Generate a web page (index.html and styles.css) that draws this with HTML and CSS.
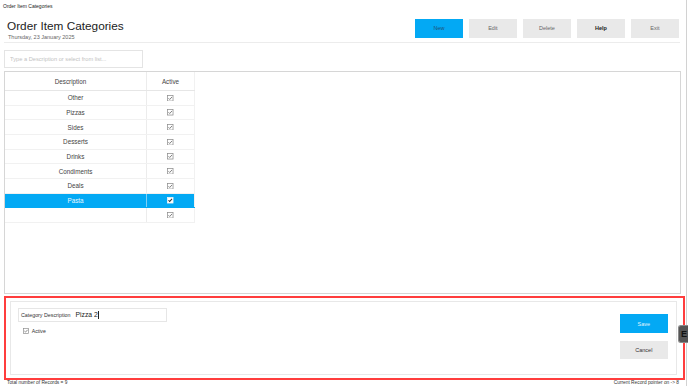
FILE: index.html
```html
<!DOCTYPE html>
<html lang="en">
<head>
<meta charset="utf-8">
<title>Order Item Categories</title>
<link rel="stylesheet" href="styles.css">
</head>
<body>
<div class="app">
  <div class="titlebar">Order Item Categories</div>
  <div class="header">
    <div class="heading">
      <h1>Order Item Categories</h1>
      <div class="date">Thursday, 23 January 2025</div>
    </div>
    <div class="actions">
      <button class="btn btn-primary">New</button>
      <button class="btn">Edit</button>
      <button class="btn">Delete</button>
      <button class="btn btn-bold">Help</button>
      <button class="btn">Exit</button>
    </div>
  </div>
  <input class="search" type="text" placeholder="Type a Description or select from list...">
  <div class="grid">
    <div class="table">
      <div class="row head"><div class="cell desc">Description</div><div class="cell act">Active</div></div>
      <div class="row"><div class="cell desc">Other</div><div class="cell act"><svg class="chk" viewBox="0 0 7 7"><rect x="0.5" y="0.5" width="6" height="6"/><path d="M1.6 3.5 L2.9 4.8 L5.4 2.1"/></svg></div></div>
      <div class="row"><div class="cell desc">Pizzas</div><div class="cell act"><svg class="chk" viewBox="0 0 7 7"><rect x="0.5" y="0.5" width="6" height="6"/><path d="M1.6 3.5 L2.9 4.8 L5.4 2.1"/></svg></div></div>
      <div class="row"><div class="cell desc">Sides</div><div class="cell act"><svg class="chk" viewBox="0 0 7 7"><rect x="0.5" y="0.5" width="6" height="6"/><path d="M1.6 3.5 L2.9 4.8 L5.4 2.1"/></svg></div></div>
      <div class="row"><div class="cell desc">Desserts</div><div class="cell act"><svg class="chk" viewBox="0 0 7 7"><rect x="0.5" y="0.5" width="6" height="6"/><path d="M1.6 3.5 L2.9 4.8 L5.4 2.1"/></svg></div></div>
      <div class="row"><div class="cell desc">Drinks</div><div class="cell act"><svg class="chk" viewBox="0 0 7 7"><rect x="0.5" y="0.5" width="6" height="6"/><path d="M1.6 3.5 L2.9 4.8 L5.4 2.1"/></svg></div></div>
      <div class="row"><div class="cell desc">Condiments</div><div class="cell act"><svg class="chk" viewBox="0 0 7 7"><rect x="0.5" y="0.5" width="6" height="6"/><path d="M1.6 3.5 L2.9 4.8 L5.4 2.1"/></svg></div></div>
      <div class="row"><div class="cell desc">Deals</div><div class="cell act"><svg class="chk" viewBox="0 0 7 7"><rect x="0.5" y="0.5" width="6" height="6"/><path d="M1.6 3.5 L2.9 4.8 L5.4 2.1"/></svg></div></div>
      <div class="row selected"><div class="cell desc">Pasta</div><div class="cell act"><svg class="chk" viewBox="0 0 7 7"><rect x="0.5" y="0.5" width="6" height="6"/><path d="M1.6 3.5 L2.9 4.8 L5.4 2.1"/></svg></div></div>
      <div class="row"><div class="cell desc"></div><div class="cell act"><svg class="chk" viewBox="0 0 7 7"><rect x="0.5" y="0.5" width="6" height="6"/><path d="M1.6 3.5 L2.9 4.8 L5.4 2.1"/></svg></div></div>
    </div>
  </div>
  <div class="editor">
    <div class="panel">
      <div class="fields">
        <div class="field"><span class="field-label">Category Description</span><span class="field-value">Pizza 2</span><span class="caret"></span></div>
        <div class="check-row"><svg class="chk chk-lg" viewBox="0 0 7 7"><rect x="0.5" y="0.5" width="6" height="6"/><path d="M1.6 3.5 L2.9 4.8 L5.4 2.1"/></svg><span>Active</span></div>
      </div>
      <div class="panel-actions">
        <button class="btn btn-primary btn-save">Save</button>
        <button class="btn btn-cancel">Cancel</button>
      </div>
    </div>
  </div>
  <div class="footer"><span>Total number of Records = 9</span><span>Current Record pointer on -&gt; 8</span></div>
</div>
<div class="side-tab">E</div>
</body>
</html>
```

FILE: styles.css
```css
* { box-sizing: border-box; }
html, body { margin: 0; padding: 0; }
body {
  font-family: "Liberation Sans", Arial, sans-serif;
  background: #fff;
  color: #333;
}
.app {
  width: 687px;
  height: 386px;
  border-right: 1px solid #d2d2d2;
  display: flex;
  flex-direction: column;
  overflow: hidden;
}
.app > * { flex-shrink: 0; }
.titlebar {
  height: 12px;
  line-height: 12px;
  font-size: 5px;
  padding-left: 3px;
  color: #222;
}
.header {
  height: 31px;
  margin: 0 6px 0 4px;
  padding: 0 1px 0 3px;
  border-bottom: 1px solid #ececec;
  display: flex;
  justify-content: space-between;
  align-items: flex-start;
}
.heading h1 {
  margin: 6.5px 0 0;
  font-size: 11.8px;
  font-weight: normal;
  line-height: 14px;
  color: #222;
}
.date {
  font-size: 5.5px;
  line-height: 7px;
  color: #666;
  margin-top: 1px;
  padding-left: 1px;
}
.actions {
  display: flex;
  gap: 5.7px;
  margin-top: 7px;
}
.btn {
  width: 48.3px;
  height: 18.5px;
  border: 0;
  padding: 0;
  background: #e9e9e9;
  font-family: inherit;
  font-size: 5.5px;
  color: #666;
}
.btn-primary {
  background: #03a9f4;
  color: #1f5078;
}
.btn-bold {
  font-weight: bold;
  color: #222;
}
.search {
  display: block;
  margin: 7px 0 0 4px;
  width: 139px;
  height: 18px;
  border: 1px solid #e4e4e4;
  padding: 0 5px;
  font-family: inherit;
  font-size: 5.7px;
  color: #333;
  outline: none;
}
.search::placeholder { color: #c2c2c2; }
.grid {
  margin: 3px 0 0 4px;
  width: 677px;
  height: 223px;
  border: 1px solid #d6d6d6;
}
.table {
  width: 190px;
}
.row {
  display: flex;
  height: 14.67px;
  border-bottom: 1px solid #f1f1f1;
}
.row.head {
  height: 19px;
  border-bottom: 1px solid #e6e6e6;
}
.cell {
  display: flex;
  align-items: center;
  justify-content: center;
  font-size: 6.3px;
  color: #444;
}
.desc {
  width: 142px;
  border-right: 1px solid #ececec;
}
.head .desc { padding-right: 10px; }
.act {
  width: 48px;
  border-right: 1px solid #f1f1f1;
}
.row.selected {
  background: #03a9f4;
  border-bottom-color: #03a9f4;
}
.row.selected .cell { color: #e9f7ff; }
.row.selected .desc { border-right-color: #7fd0f7; }
.chk {
  width: 6.5px;
  height: 6.5px;
  display: block;
}
.chk rect {
  fill: #fff;
  stroke: #8d8d8d;
  stroke-width: 0.8;
}
.chk path {
  fill: none;
  stroke: #6a6a6a;
  stroke-width: 0.9;
}
.row.selected .chk rect { fill: #fff; stroke: #f4f4f4; }
.row.selected .chk path { stroke: #333; stroke-width: 1.1; }
.editor {
  margin: 2px 0 0 4px;
  width: 681px;
  height: 84px;
  border: 2px solid #ff3d3d;
  padding: 3px 6px 3px 3.5px;
}
.panel {
  height: 100%;
  border: 1px solid #e8e8e8;
  display: flex;
  justify-content: space-between;
  padding: 5.7px 8px 0 7.5px;
}
.field {
  display: flex;
  align-items: center;
  width: 148.5px;
  height: 14px;
  border: 1px solid #e6e6e6;
  padding-left: 2px;
}
.field-label {
  font-size: 5.3px;
  color: #333;
}
.field-value {
  margin-left: 5px;
  font-size: 6.8px;
  color: #222;
}
.caret {
  width: 0.7px;
  height: 8px;
  background: #222;
  margin-left: 0.5px;
}
.check-row {
  margin: 6px 0 0 5.3px;
  display: flex;
  align-items: center;
  gap: 2.4px;
  font-size: 5.2px;
  color: #333;
}
.chk-lg { width: 6px; height: 6px; }
.panel-actions {
  display: flex;
  flex-direction: column;
  gap: 8.2px;
  margin-top: 6.6px;
}
.btn-save { color: #e3f4fd; }
.btn-cancel { color: #333; }
.footer {
  height: 6px;
  line-height: 6px;
  font-size: 4.8px;
  color: #333;
  display: flex;
  justify-content: space-between;
  align-items: flex-end;
  padding: 0 7px 0 7px;
}
.side-tab {
  position: absolute;
  left: 678px;
  top: 325px;
  width: 10px;
  height: 18px;
  background: #555;
  border: 1px solid #8a8a8a;
  border-right: 0;
  border-radius: 3px 0 0 3px;
  color: #111;
  font-size: 9px;
  font-weight: bold;
  line-height: 16px;
  padding-left: 2px;
}
```
